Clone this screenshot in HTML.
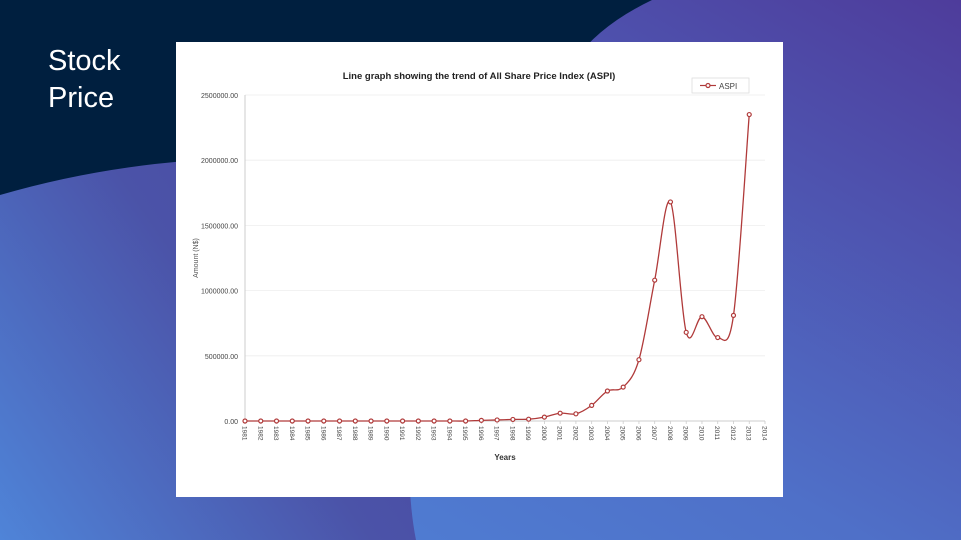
<!DOCTYPE html>
<html><head><meta charset="utf-8"><style>
html,body{margin:0;padding:0;width:961px;height:540px;overflow:hidden;font-family:"Liberation Sans",sans-serif}
svg{display:block}
</style></head><body>
<svg id="s" width="961" height="540" viewBox="0 0 961 540" xmlns="http://www.w3.org/2000/svg">
<defs>
<linearGradient id="g1" x1="0" y1="1" x2="1" y2="0">
<stop offset="0" stop-color="#4f86da"/><stop offset="0.45" stop-color="#4f70c8"/><stop offset="1" stop-color="#4e3c9b"/>
</linearGradient>
<linearGradient id="g2" x1="0" y1="540" x2="420" y2="250" gradientUnits="userSpaceOnUse">
<stop offset="0" stop-color="#4f84d8"/><stop offset="0.6" stop-color="#4b53a8"/><stop offset="1" stop-color="#4a49a2"/>
</linearGradient>
</defs>
<rect width="961" height="540" fill="url(#g1)"/>
<path d="M0 195 Q90 160 250 158 L420 300 Q400 460 416 540 H0 Z" fill="url(#g2)"/>
<path d="M0 0 H652 Q600 25 575 60 L250 158 Q120 160 0 195 Z" fill="#001f3f"/>
<text x="48" y="70" fill="#fff" font-size="29" font-family="Liberation Sans, sans-serif">Stock</text>
<text x="48" y="107" fill="#fff" font-size="29" font-family="Liberation Sans, sans-serif">Price</text>
<rect x="176" y="42" width="607" height="455" fill="#fff"/>
<text x="479" y="79" text-anchor="middle" font-size="9.5" font-weight="bold" fill="#222">Line graph showing the trend of All Share Price Index (ASPI)</text>
<rect x="692" y="78" width="57" height="15" fill="#fff" stroke="#ddd" stroke-width="0.8"/>
<line x1="700" y1="85.5" x2="716" y2="85.5" stroke="#b03a3a" stroke-width="1.2"/>
<circle cx="708" cy="85.5" r="2" fill="#fff" stroke="#b03a3a" stroke-width="1.2"/>
<text x="719" y="89" font-size="8" fill="#444">ASPI</text>
<g id="ax"></g>
<text transform="translate(198,258) rotate(-90)" text-anchor="middle" font-size="7" fill="#555">Amount (N$)</text>
<text x="505" y="460" text-anchor="middle" font-size="8" font-weight="bold" fill="#333">Years</text>
</svg>
<script>
var ns="http://www.w3.org/2000/svg",ax=document.getElementById('ax');
function el(t,a,txt){var e=document.createElementNS(ns,t);for(var k in a)e.setAttribute(k,a[k]);if(txt)e.textContent=txt;ax.appendChild(e);return e;}
var x0=245,x1=765,yb=421,yt=95;
function Y(v){return yb-(v/2500000)*(yb-yt);}
function X(i){return x0+i*(x1-x0)/33;}
for(var k=0;k<=5;k++){var y=Y(k*500000);
 if(k>0)el('line',{x1:x0,x2:x1,y1:y,y2:y,stroke:'#eee','stroke-width':0.8});
 el('text',{x:x0-7,y:y+3,'text-anchor':'end','font-size':7,fill:'#444'},(k*500000)+'.00');}
el('line',{x1:x0,x2:x0,y1:yt,y2:yb,stroke:'#ccc','stroke-width':1});
el('line',{x1:x0,x2:x1,y1:yb,y2:yb,stroke:'#ccc','stroke-width':1});
for(var i=0;i<=33;i++){var x=X(i);el('line',{x1:x,x2:x,y1:yb,y2:yb+3,stroke:'#ccc','stroke-width':0.8});
 el('text',{transform:'translate('+(x-2.5)+','+(yb+5)+') rotate(90)','font-size':6.5,fill:'#444'},String(1981+i));}
var d=[0,0,0,0,0,0,0,0,0,0,0,0,0,0,0,5000,8000,12000,14000,30000,60000,55000,120000,230000,260000,470000,1080000,1680000,680000,800000,640000,810000,2350000];
var p=d.map(function(v,i){return [X(i),Y(v)];});
var s='M'+p[0][0]+' '+p[0][1];
for(var i=0;i<p.length-1;i++){var a=p[i-1]||p[i],b=p[i],c=p[i+1],e=p[i+2]||c;
 s+=' C'+(b[0]+(c[0]-a[0])/6)+' '+(b[1]+(c[1]-a[1])/6)+' '+(c[0]-(e[0]-b[0])/6)+' '+(c[1]-(e[1]-b[1])/6)+' '+c[0]+' '+c[1];}
el('path',{d:s,fill:'none',stroke:'#b03a3a','stroke-width':1.3});
p.forEach(function(q){el('circle',{cx:q[0],cy:q[1],r:2,fill:'#fff',stroke:'#b03a3a','stroke-width':1.2});});
</script>
</body></html>
